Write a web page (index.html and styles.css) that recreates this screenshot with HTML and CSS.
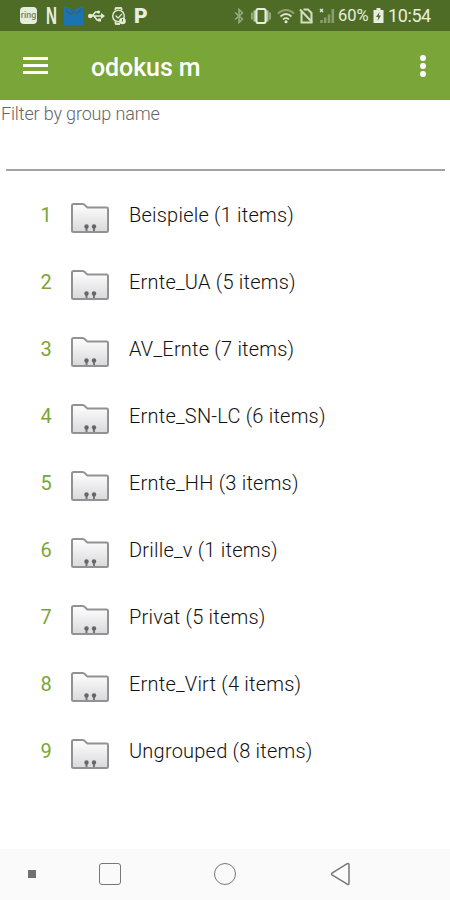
FILE: index.html
```
<!DOCTYPE html>
<html lang="en">
<head>
  <meta charset="UTF-8">
  <title>odokus m</title>
  <link rel="stylesheet" href="styles.css">
</head>
<body>
<svg class="defs" width="0" height="0">
  <defs>
    <linearGradient id="paper" x1="0" y1="0" x2="0" y2="1">
      <stop offset="0" stop-color="#fff"/>
      <stop offset="1" stop-color="#d9d9dc"/>
    </linearGradient>
    <symbol id="folder" viewBox="0 0 40 32">
      <path d="M2 28.5V3.6Q2 2 3.6 2H12.5Q14 2 15 3.2L17.5 5.6H36.6Q38 5.6 38 7V28.5Q38 30 36.5 30H3.5Q2 30 2 28.5Z" fill="url(#paper)" stroke="#929294" stroke-width="2"/>
      <path d="M16.5 23.5V29M24 23.5V29" stroke="#777" stroke-width="2"/>
      <circle cx="16.5" cy="24.5" r="2.2" fill="#666"/>
      <circle cx="24" cy="24.5" r="2.2" fill="#666"/>
    </symbol>
  </defs>
</svg>

<header class="statusbar">
  <div class="notifications">
    <span class="ring">ring</span>
    <span class="letter-n">N</span>
    <svg width="19" height="18" viewBox="0 0 19 18">
      <path d="M0 0H5L8 4L14 1H16V0H19V18H0Z" fill="#1c73b2"/>
      <path d="M2 4L7 7L10 5L13 7L17 2" fill="none" stroke="#35637d" stroke-width="1.6"/>
    </svg>
    <svg class="usb" width="17" height="14" viewBox="0 0 17 14">
      <path d="M2 7H14M4 7L7.5 3H10M6 7L9 11H11" fill="none" stroke="#e5ecd9" stroke-width="1.6"/>
      <path d="M13 4L17 7L13 10Z" fill="#e5ecd9"/>
      <circle cx="2.2" cy="7" r="2.2" fill="#e5ecd9"/>
      <circle cx="10.5" cy="3" r="1.6" fill="#e5ecd9"/>
      <path d="M10 9.5h3v3h-3z" fill="#e5ecd9"/>
    </svg>
    <svg class="watch" width="16" height="18" viewBox="0 0 16 18">
      <path d="M4 3L5 1H10L11 3M4 15L5 17H9" fill="none" stroke="#dce4cf" stroke-width="1.8"/>
      <circle cx="7.5" cy="9" r="5.8" fill="none" stroke="#dce4cf" stroke-width="1.5"/>
      <path d="M4.5 8.5L7 11L11 7" fill="none" stroke="#dce4cf" stroke-width="1.3"/>
      <circle cx="11.5" cy="14" r="3.3" fill="#e5ecd9"/>
      <path d="M11.5 12V14.5" stroke="#4f6c26" stroke-width="1"/>
    </svg>
    <span class="letter-p">P</span>
  </div>
  <div class="system">
    <svg class="bluetooth" width="10" height="16" viewBox="0 0 10 16">
      <path d="M1 4.5L8.5 11L5 14.5V1.5L8.5 5L1 11.5" fill="none" stroke="#9aac83" stroke-width="1.5"/>
    </svg>
    <svg class="vibrate" width="20" height="16" viewBox="0 0 20 16">
      <path d="M4 2.5V13.5M16 2.5V13.5" stroke="#b7c5a3" stroke-width="3"/>
      <path d="M1 4.5V11.5M19 4.5V11.5" stroke="#a5b58e" stroke-width="1.6"/>
      <rect x="5.500" y="1" width="9" height="14" rx="1.5" fill="#4f6c26" stroke="#e8eedf" stroke-width="2"/>
    </svg>
    <svg class="wifi" width="18" height="16" viewBox="0 0 18 16">
      <path d="M1 5.5Q9 -1.5 17 5.5" fill="none" stroke="#8fa374" stroke-width="1.7"/>
      <path d="M3.5 8.5Q9 3.5 14.5 8.5M6 11.3Q9 8.8 12 11.3" fill="none" stroke="#dce4cf" stroke-width="1.7"/>
      <circle cx="9" cy="13.8" r="1.5" fill="#e8eedf"/>
    </svg>
    <svg class="nosim" width="15" height="16" viewBox="0 0 15 16">
      <path d="M2.5 4V14.5H12.5V5L9 1.5H4.5M1 1.5L13.5 14.5" fill="none" stroke="#d3ddc4" stroke-width="2"/>
    </svg>
    <svg class="signal" width="17" height="16" viewBox="0 0 17 16">
      <path d="M1 1L4 4M4 1L1 4" stroke="#dce4cf" stroke-width="1.5"/>
      <path d="M2.5 12V15M6.2 9.5V15M10 6.5V15M13.8 1V15" stroke="#899d6d" stroke-width="2.6"/>
    </svg>
    <span class="percent">60%</span>
    <svg class="battery" width="11" height="15" viewBox="0 0 11 15">
      <path d="M3.5 0H7.5V2H10.5V15H.5V2H3.5Z" fill="#e8eedf"/>
      <path d="M6.5 4L3 9H5.3L4.5 13L8 7.5H5.8Z" fill="#4f6c26"/>
    </svg>
    <span class="clock">10:54</span>
  </div>
</header>

<nav class="appbar">
  <div class="menu"><i></i><i></i><i></i></div>
  <h1>odokus m</h1>
  <div class="more"><i></i><i></i><i></i></div>
</nav>

<main>
  <div class="filter">Filter by group name</div>
  <ul class="groups">
    <li><span class="num">1</span><svg class="folder"><use href="#folder"/></svg><span class="name">Beispiele (1 items)</span></li>
    <li><span class="num">2</span><svg class="folder"><use href="#folder"/></svg><span class="name">Ernte_UA (5 items)</span></li>
    <li><span class="num">3</span><svg class="folder"><use href="#folder"/></svg><span class="name">AV_Ernte (7 items)</span></li>
    <li><span class="num">4</span><svg class="folder"><use href="#folder"/></svg><span class="name">Ernte_SN-LC (6 items)</span></li>
    <li><span class="num">5</span><svg class="folder"><use href="#folder"/></svg><span class="name">Ernte_HH (3 items)</span></li>
    <li><span class="num">6</span><svg class="folder"><use href="#folder"/></svg><span class="name">Drille_v (1 items)</span></li>
    <li><span class="num">7</span><svg class="folder"><use href="#folder"/></svg><span class="name">Privat (5 items)</span></li>
    <li><span class="num">8</span><svg class="folder"><use href="#folder"/></svg><span class="name">Ernte_Virt (4 items)</span></li>
    <li><span class="num">9</span><svg class="folder"><use href="#folder"/></svg><span class="name">Ungrouped (8 items)</span></li>
  </ul>
</main>

<footer class="navbar">
  <span class="dot"></span>
  <span class="recent"></span>
  <span class="home"></span>
  <svg class="back" width="22" height="24" viewBox="0 0 22 24">
    <path d="M2 11.2L17.2 1.7Q19 1 19 3V21Q19 23 17.2 22.2L2 12.8Q1 12 2 11.2Z" fill="none" stroke="#777" stroke-width="1.5"/>
  </svg>
</footer>
</body>
</html>
```
FILE: styles.css
```
body {
  margin: 0;
  height: 900px;
  display: flex;
  flex-direction: column;
  overflow: hidden;
  background: #fff;
  font-family: Roboto, "Liberation Sans", sans-serif;
}
.defs {
  position: absolute;
}
/* status bar */
.statusbar {
  box-sizing: border-box;
  height: 31px;
  flex: none;
  display: flex;
  justify-content: space-between;
  padding: 0 19px 0 20px;
  background: #4f6c26;
  color: #e8eedf;
}
.notifications, .system {
  display: flex;
  align-items: center;
}
.ring {
  width: 17px;
  height: 17px;
  border-radius: 4px;
  background: #e8eedf;
  color: #71845a;
  font-size: 9px;
  font-weight: 500;
  line-height: 16px;
  text-align: center;
}
.letter-n {
  width: 10px;
  margin: 0 8px 0 9px;
  font: bold 23px/30px "Liberation Sans", sans-serif;
  transform: scaleX(0.66);
  transform-origin: left;
}
.usb {
  margin-left: 5px;
}
.watch {
  margin-left: 6px;
}
.letter-p {
  margin-left: 7px;
  font-size: 21px;
  font-weight: 900;
}
.vibrate {
  margin-left: 7px;
}
.wifi {
  margin-left: 6px;
}
.nosim {
  margin-left: 4px;
}
.signal {
  margin-left: 5px;
}
.percent {
  width: 31px;
  margin-left: 2px;
  font-size: 16.5px;
}
.battery {
  margin-left: 4px;
}
.clock {
  width: 43px;
  margin-left: 4px;
  font-size: 18px;
  line-height: 32px;
  letter-spacing: -0.4px;
}
/* title bar */
.appbar {
  box-sizing: border-box;
  height: 69px;
  flex: none;
  display: flex;
  align-items: center;
  padding: 0 23px;
  background: #7aa539;
  color: #fff;
}
.menu {
  display: flex;
  flex-direction: column;
  gap: 4px;
  width: 25px;
}
.menu i {
  height: 3px;
  background: #fff;
}
.appbar h1 {
  margin: 3px 0 0 43px;
  font-size: 25px;
  font-weight: 500;
  letter-spacing: -0.1px;
}
.more {
  display: flex;
  flex-direction: column;
  gap: 2px;
  margin-left: auto;
  margin-right: 1px;
}
.more i {
  width: 6px;
  height: 6px;
  border-radius: 50%;
  background: #fff;
}
/* filter and list */
main {
  flex: 1;
}
.filter {
  height: 69px;
  margin: 0 5px 0 6px;
  border-bottom: 2px solid #a3a3a3;
  text-indent: -5px;
  color: #666;
  font-size: 18px;
  font-weight: 300;
  letter-spacing: -0.15px;
  line-height: 27px;
}
.groups {
  list-style: none;
  margin: 0;
  padding: 11px 0 0;
}
.groups li {
  display: flex;
  align-items: center;
  height: 66.9px;
}
.num {
  width: 11px;
  margin-left: 40.5px;
  color: #7aa539;
  font-size: 20px;
}
.folder {
  width: 40px;
  height: 32px;
  margin: 6px 0 0 18.8px;
}
.name {
  margin-left: 18.7px;
  color: #111;
  font-size: 20px;
  font-weight: 300;
  letter-spacing: 0.22px;
}
/* system navigation */
.navbar {
  height: 51px;
  flex: none;
  display: flex;
  align-items: center;
  background: #fafafa;
}
.dot {
  width: 8px;
  height: 8px;
  margin: 0 0 2px 28px;
  background: #707070;
}
.recent, .home {
  box-sizing: border-box;
  width: 22px;
  height: 22px;
  margin-bottom: 1px;
  border: 1.5px solid #777;
}
.recent {
  margin-left: 63px;
  border-radius: 3px;
}
.home {
  margin-left: 93px;
  border-radius: 50%;
}
.back {
  margin: 0 0 1px 94px;
}
```
